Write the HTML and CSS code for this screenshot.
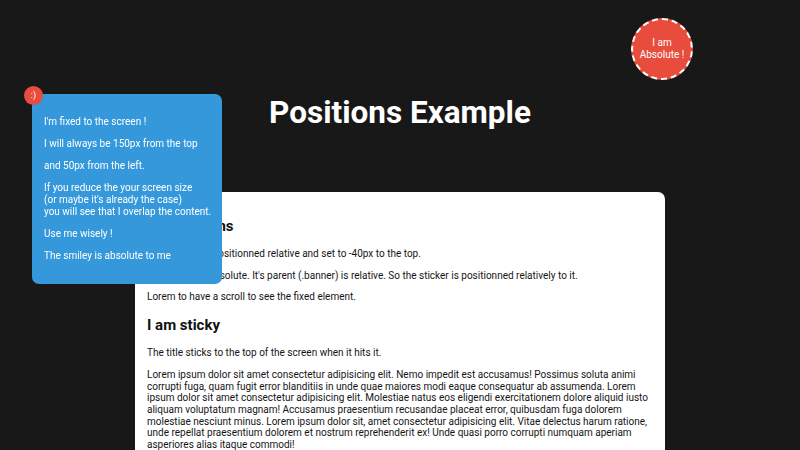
FILE: index.html
```html
<!DOCTYPE html>
<html lang="en">
<head>
<meta charset="utf-8">
<title>Positions Example</title>
<link rel="stylesheet" href="styles.css">
</head>
<body>
<header class="banner">
  <h1 class="title">Positions Example</h1>
  <div class="sticker">I am<br>Absolute !</div>
</header>
<main class="card">
  <h2 class="card-heading">Explanations</h2>
  <p>The content is positionned relative and set to -40px to the top.</p>
  <p>The sticker is absolute. It's parent (.banner) is relative. So the sticker is positionned relatively to it.</p>
  <p>Lorem to have a scroll to see the fixed element.</p>
  <h2 class="card-heading">I am sticky</h2>
  <p>The title sticks to the top of the screen when it hits it.</p>
  <p>Lorem ipsum dolor sit amet consectetur adipisicing elit. Nemo impedit est accusamus! Possimus soluta animi corrupti fuga, quam fugit error blanditiis in unde quae maiores modi eaque consequatur ab assumenda. Lorem ipsum dolor sit amet consectetur adipisicing elit. Molestiae natus eos eligendi exercitationem dolore aliquid iusto aliquam voluptatum magnam! Accusamus praesentium recusandae placeat error, quibusdam fuga dolorem molestiae nesciunt minus. Lorem ipsum dolor sit, amet consectetur adipisicing elit. Vitae delectus harum ratione, unde repellat praesentium dolorem et nostrum reprehenderit ex! Unde quasi porro corrupti numquam aperiam asperiores alias itaque commodi!</p>
  <p>Lorem ipsum dolor sit amet consectetur adipisicing elit. Nemo impedit est accusamus! Possimus soluta animi corrupti fuga, quam fugit error blanditiis in unde quae maiores modi eaque consequatur ab assumenda.</p>
</main>
<aside class="fixed-box">
  <span class="smiley">:)</span>
  <p>I'm fixed to the screen !</p>
  <p>I will always be 150px from the top</p>
  <p>and 50px from the left.</p>
  <p>If you reduce the your screen size<br>(or maybe it's already the case)<br>you will see that I overlap the content.</p>
  <p>Use me wisely !</p>
  <p>The smiley is absolute to me</p>
</aside>
</body>
</html>
```
FILE: styles.css
```css
html, body {
  margin: 0;
  padding: 0;
  background: #181818;
  font-family: Roboto, "Liberation Sans", sans-serif;
  font-size: 10px;
  line-height: 11.7px;
  color: #151515;
}

.banner {
  position: relative;
  padding: 95px 0 61px;
}

.title {
  margin: 0;
  text-align: center;
  color: #ffffff;
  font-size: 31.5px;
  font-weight: 700;
  line-height: 36px;
}

.sticker {
  position: absolute;
  top: 18px;
  left: 631px;
  width: 58px;
  height: 58px;
  border: 2px dashed #ffffff;
  border-radius: 50%;
  background: #e74c3c;
  color: #ffffff;
  font-size: 10px;
  line-height: 12px;
  display: flex;
  align-items: center;
  justify-content: center;
  text-align: center;
}

.card {
  width: 506px;
  margin: 0 auto;
  padding: 12px;
  background: #ffffff;
  border-radius: 7px;
}

.card-heading {
  font-size: 15px;
  font-weight: 700;
  line-height: 19px;
  margin: 12.5px 0;
  color: #111111;
}

.card p {
  margin: 10px 0;
}

.fixed-box {
  position: fixed;
  top: 94px;
  left: 32px;
  width: 172px;
  padding: 12px 6px 12px 12px;
  background: #3498db;
  color: #ffffff;
  border-radius: 7px;
  font-size: 10px;
  line-height: 12px;
  white-space: nowrap;
}

.fixed-box p {
  margin: 10px 0;
}

.smiley {
  position: absolute;
  top: -8px;
  left: -8px;
  width: 19px;
  height: 19px;
  border-radius: 50%;
  background: #e74c3c;
  color: #ffffff;
  font-size: 9px;
  line-height: 19px;
  text-align: center;
}
```
